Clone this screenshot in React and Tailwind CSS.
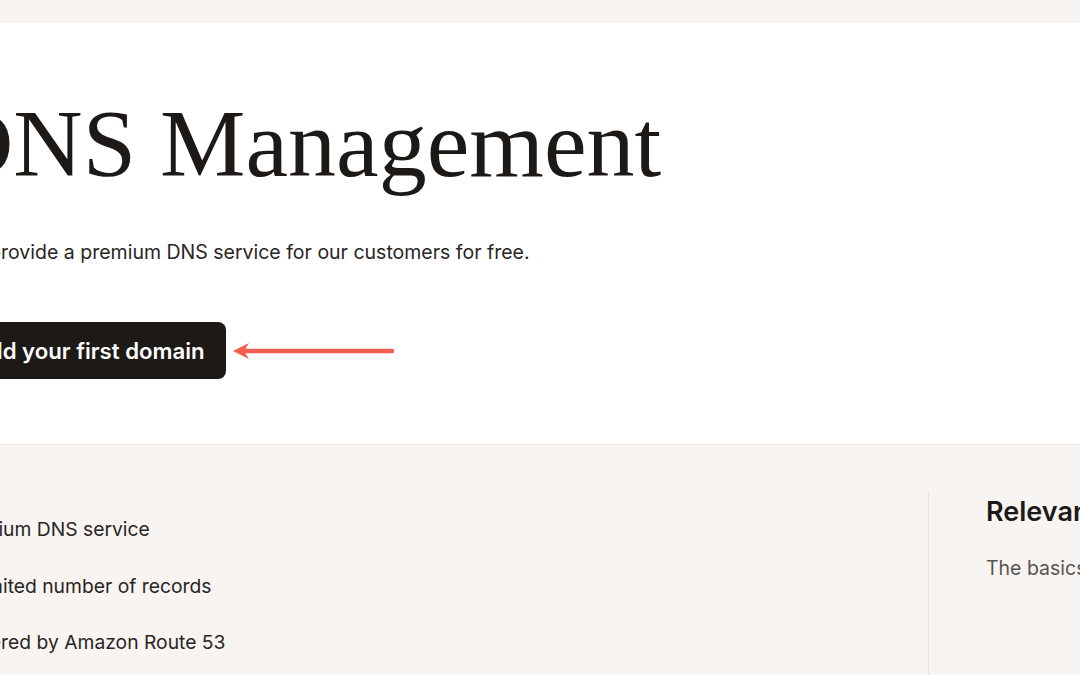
import React from 'react';

const features = ['Premium DNS service', 'Unlimited number of records', 'Powered by Amazon Route 53'];

const Arrow = () => (
  <svg width="164" height="20" viewBox="0 0 164 20" fill="none" className="ml-[5px]">
    <path d="M2 10 L18 2 L13 10 L18 18 Z" fill="#f45e4e" />
    <line x1="12" y1="10" x2="161" y2="10" stroke="#f45e4e" strokeWidth="4.5" strokeLinecap="round" />
  </svg>
);

export default function App() {
  return (
    <div className="w-[1080px] h-[675px] overflow-hidden bg-[#f8f4f1] font-['Inter',sans-serif] text-[#1c1917]">
      <div className="h-[22px] border-b border-[#efe7e3]" />

      <section className="h-[423px] bg-white border-b border-[#efe4e1]">
        <div className="ml-[-46px] pt-[74px]">
          <h1 className="font-['Liberation_Serif',serif] font-normal text-[96px] leading-none ml-[-10px] text-[#1c1917] whitespace-nowrap">
            DNS Management
          </h1>
          <p className="mt-[46px] text-[19.5px] leading-[28px] text-[#292524] whitespace-nowrap">
            We provide a premium DNS service for our customers for free.
          </p>
          <div className="mt-[56px] ml-[-3px] flex items-center">
            <button className="h-[57px] rounded-[8px] bg-[#1c1917] pl-[22px] pr-[21px] text-[22.2px] font-semibold text-white whitespace-nowrap">
              Add your first domain
            </button>
            <Arrow />
          </div>
        </div>
      </section>

      <section className="flex">
        <ul className="ml-[-49px] flex-1 pt-[70px] flex flex-col gap-[28.5px] text-[19.3px] leading-[28px] text-[#292524]">
          {features.map((f) => (
            <li key={f} className="whitespace-nowrap">{f}</li>
          ))}
        </ul>
        <aside className="mt-[46px] w-[152px] h-[300px] border-l border-[#efe3df] pl-[57px] pt-[4px]">
          <h2 className="text-[27px] leading-[34px] font-semibold whitespace-nowrap text-[#1c1917]">Relevant resources</h2>
          <p className="mt-[25px] text-[19.5px] leading-[28px] text-[#57534e] whitespace-nowrap">The basics of DNS</p>
        </aside>
      </section>
    </div>
  );
}
